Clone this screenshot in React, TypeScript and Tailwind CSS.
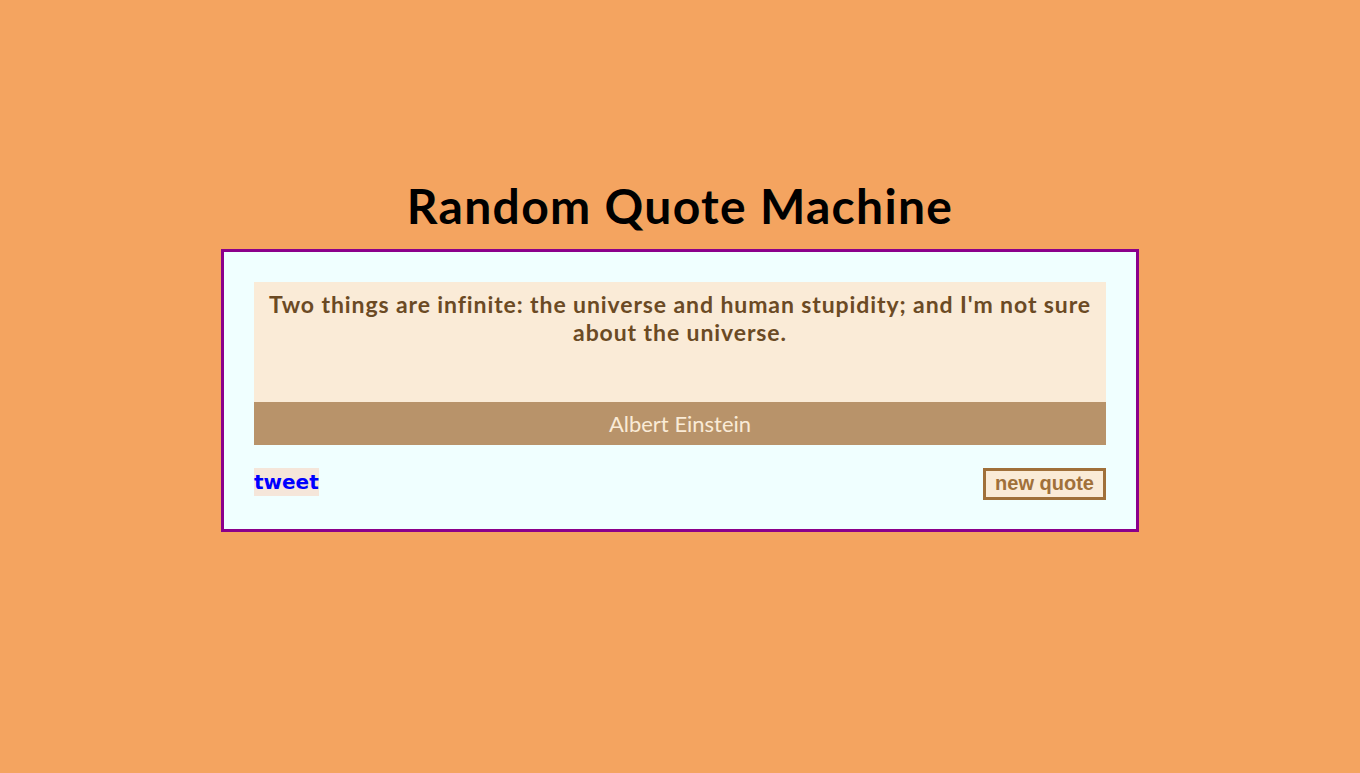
import React from 'react';

const quote = {
  text: "Two things are infinite: the universe and human stupidity; and I'm not sure about the universe.",
  author: 'Albert Einstein',
};

export default function App() {
  return (
    <div className="min-h-[773px] w-full bg-[#f4a460] pt-[178px] font-['Lato',sans-serif]">
      <h1 className="text-center text-[48px] font-bold leading-[56px] tracking-[1.3px] text-black">Random Quote Machine</h1>
      <div className="mx-auto mt-[15px] w-[918px] border-[3px] border-[#8b008b] bg-[#f0ffff] px-[30px] pt-[30px] pb-[29px]">
        <div className="h-[120px] bg-[#faebd7] px-3 pt-[8px] text-center text-[23px] font-bold leading-[28px] tracking-[0.9px] text-[#6b4a24]">
          {quote.text}
        </div>
        <div className="flex h-[43px] items-center justify-center bg-[#b8936a] text-[22px] text-[#faebd7]">
          {quote.author}
        </div>
        <div className="mt-[23px] flex items-start justify-between">
          <a href="#" className="bg-[#f5e6da] font-['DejaVu_Sans',sans-serif] text-[20px] font-bold leading-[28px] text-[#0000ff]">
            tweet
          </a>
          <button className="flex h-[32px] items-center border-[3px] border-[#a0703a] bg-[#faebd7] px-[9px] pb-[3px] font-['Liberation_Sans',sans-serif] text-[20px] font-bold leading-[20px] text-[#a0703a]">
            new quote
          </button>
        </div>
      </div>
    </div>
  );
}
